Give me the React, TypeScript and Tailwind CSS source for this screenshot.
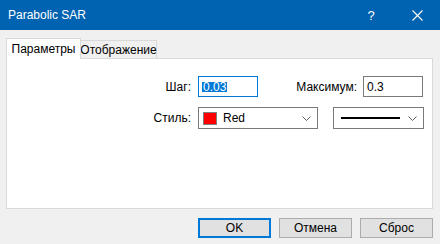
import React from "react";

const Chevron = () => (
  <svg width="9" height="5" viewBox="0 0 9 5" className="block">
    <polyline points="0.5,0.5 4.5,4.5 8.5,0.5" fill="none" stroke="#5f5f5f" strokeWidth="1" />
  </svg>
);

export default function App() {
  return (
    <div
      className="w-[440px] h-[244px] bg-[#f0f0f0] flex flex-col text-[12px] text-black overflow-hidden"
      style={{ fontFamily: '"Segoe UI", "Liberation Sans", Arial, sans-serif' }}
    >
      {/* Title bar */}
      <div className="h-[30px] bg-[#0063b1] flex items-center text-white shrink-0">
        <div className="pl-[8px] text-[12px] flex-1">Parabolic SAR</div>
        <div className="w-[46px] flex justify-center text-[13px] mt-[1px]">?</div>
        <div className="w-[46px] flex justify-center mr-[0px]">
          <svg width="11" height="11" viewBox="0 0 11 11" className="block">
            <line x1="0.5" y1="0.5" x2="10.5" y2="10.5" stroke="white" strokeWidth="1.1" />
            <line x1="10.5" y1="0.5" x2="0.5" y2="10.5" stroke="white" strokeWidth="1.1" />
          </svg>
        </div>
      </div>

      {/* Tabs */}
      <div className="pl-[6px] pt-[8px] flex items-end h-[28px] shrink-0">
        <div className="relative z-10 w-[75px] h-[21px] bg-white border border-[#d9d9d9] border-b-0 flex items-center justify-center -mb-[1px] pb-[1px]">
          Параметры
        </div>
        <div className="w-[76px] h-[18px] bg-[#f0f0f0] border border-[#d9d9d9] border-l-0 border-b-0 flex items-center justify-center">
          Отображение
        </div>
      </div>

      {/* Panel */}
      <div className="ml-[6px] w-[427px] h-[151px] bg-white border border-[#d9d9d9] flex flex-col shrink-0">
        <div className="mt-[17px] flex items-center h-[21px]">
          <div className="w-[184px] text-right">Шаг:</div>
          <div className="ml-[7px] w-[60px] h-[21px] border border-[#0078d7] flex items-center pl-[3px]">
            <span className="bg-[#0078d7] text-white leading-[10px] h-[10px] px-[1px] flex items-center">0.03</span>
          </div>
          <div className="w-[99px] text-right">Максимум:</div>
          <div className="ml-[6px] w-[60px] h-[21px] border border-[#7a7a7a] flex items-center pl-[3px]">
            0.3
          </div>
        </div>
        <div className="mt-[10px] flex items-center h-[22px]">
          <div className="w-[184px] text-right">Стиль:</div>
          <div className="ml-[7px] w-[120px] h-[22px] border border-[#7a7a7a] flex items-center pl-[4px] pr-[6px]">
            <div className="w-[14px] h-[13px] bg-[#ff0000] border border-[#808080]" />
            <div className="ml-[6px] flex-1">Red</div>
            <Chevron />
          </div>
          <div className="ml-[15px] w-[91px] h-[22px] border border-[#7a7a7a] flex items-center pl-[7px] pr-[6px]">
            <div className="w-[59px] h-[2px] bg-black" />
            <div className="flex-1" />
            <Chevron />
          </div>
        </div>
      </div>

      {/* Buttons */}
      <div className="mt-[9px] flex pl-[198px] gap-[8px]">
        <div className="w-[73px] h-[20px] bg-[#e1e1e1] border-2 border-[#0078d7] flex items-center justify-center">
          OK
        </div>
        <div className="w-[73px] h-[20px] bg-[#e1e1e1] border border-[#adadad] flex items-center justify-center">
          Отмена
        </div>
        <div className="w-[73px] h-[20px] bg-[#e1e1e1] border border-[#adadad] flex items-center justify-center">
          Сброс
        </div>
      </div>
    </div>
  );
}
